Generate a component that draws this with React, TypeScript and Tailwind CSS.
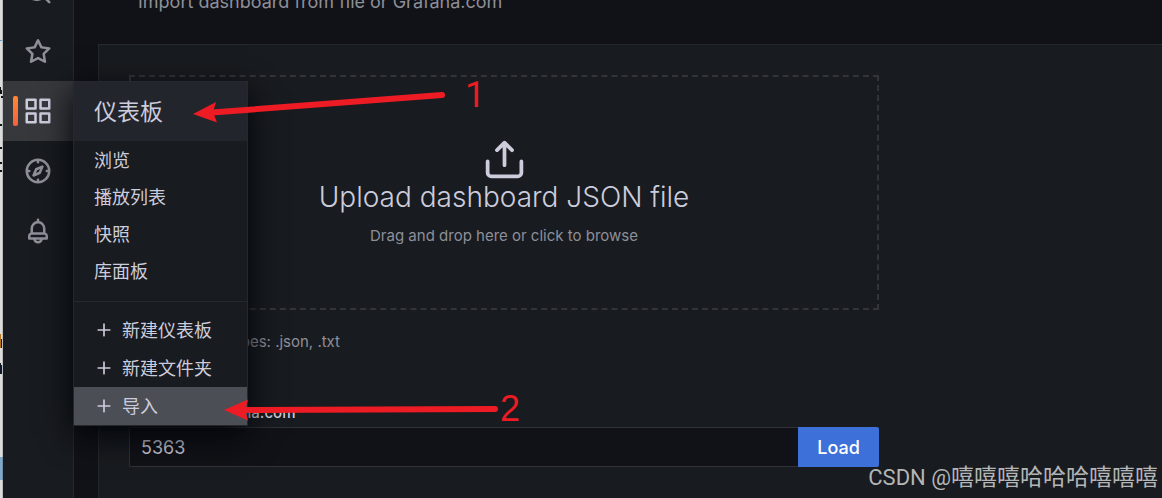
import React from 'react';

const ICONS = {
  search:
    'M21.71,20.29,18,16.61A9,9,0,1,0,16.61,18l3.68,3.68a1,1,0,0,0,1.42,0A1,1,0,0,0,21.71,20.29ZM11,18a7,7,0,1,1,7-7A7,7,0,0,1,11,18Z',
  star: 'M22,9.67A1,1,0,0,0,21.14,9l-5.69-.83L12.9,3a1,1,0,0,0-1.8,0L8.55,8.16,2.86,9a1,1,0,0,0-.81.68,1,1,0,0,0,.25,1l4.13,4-1,5.68A1,1,0,0,0,6.9,21.44L12,18.77l5.1,2.67a.93.93,0,0,0,.46.12,1,1,0,0,0,.59-.19,1,1,0,0,0,.4-1l-1-5.68,4.13-4A1,1,0,0,0,22,9.67Zm-6.15,4a1,1,0,0,0-.29.88l.72,4.2-3.76-2a1.06,1.06,0,0,0-.94,0l-3.76,2,.72-4.2a1,1,0,0,0-.29-.88l-3-3,4.21-.61a1,1,0,0,0,.76-.55L12,5.7l1.88,3.82a1,1,0,0,0,.76.55l4.21.61Z',
  apps: 'M10,13H3a1,1,0,0,0-1,1v7a1,1,0,0,0,1,1h7a1,1,0,0,0,1-1V14A1,1,0,0,0,10,13ZM9,20H4V15H9ZM21,2H14a1,1,0,0,0-1,1v7a1,1,0,0,0,1,1h7a1,1,0,0,0,1-1V3A1,1,0,0,0,21,2ZM20,9H15V4h5Zm1,4H14a1,1,0,0,0-1,1v7a1,1,0,0,0,1,1h7a1,1,0,0,0,1-1V14A1,1,0,0,0,21,13Zm-1,7H15V15h5ZM10,2H3A1,1,0,0,0,2,3v7a1,1,0,0,0,1,1h7a1,1,0,0,0,1-1V3A1,1,0,0,0,10,2ZM9,9H4V4H9Z',
  compass:
    'M12,2A10,10,0,1,0,22,12,10,10,0,0,0,12,2Zm1,17.93V19a1,1,0,0,0-2,0v.93A8,8,0,0,1,4.07,13H5a1,1,0,0,0,0-2H4.07A8,8,0,0,1,11,4.07V5a1,1,0,0,0,2,0V4.07A8,8,0,0,1,19.93,11H19a1,1,0,0,0,0,2h.93A8,8,0,0,1,13,19.93ZM15.14,7.55l-5,2.12a1,1,0,0,0-.52.52l-2.12,5a1,1,0,0,0,.21,1.1,1,1,0,0,0,.7.3.93.93,0,0,0,.4-.09l5-2.12a1,1,0,0,0,.52-.52l2.12-5a1,1,0,0,0-1.31-1.31Zm-2.49,5.1-2.28,1,1-2.28,2.28-1Z',
  bell: 'M18,13.18V10a6,6,0,0,0-5-5.91V3a1,1,0,0,0-2,0V4.09A6,6,0,0,0,6,10v3.18A3,3,0,0,0,4,16v2a1,1,0,0,0,1,1H8.14a4,4,0,0,0,7.72,0H19a1,1,0,0,0,1-1V16A3,3,0,0,0,18,13.18ZM8,10a4,4,0,0,1,8,0v3H8Zm4,10a2,2,0,0,1-1.72-1h3.44A2,2,0,0,1,12,20Zm6-3H6V16a1,1,0,0,1,1-1H17a1,1,0,0,1,1,1Z',
  upload:
    'M8.71,7.71,11,5.41V15a1,1,0,0,0,2,0V5.41l2.29,2.3a1,1,0,0,0,1.42,0,1,1,0,0,0,0-1.42l-4-4a1,1,0,0,0-.33-.21,1,1,0,0,0-.76,0,1,1,0,0,0-.33.21l-4,4A1,1,0,1,0,8.71,7.71ZM21,12a1,1,0,0,0-1,1v6a1,1,0,0,1-1,1H5a1,1,0,0,1-1-1V13a1,1,0,0,0-2,0v6a3,3,0,0,0,3,3H19a3,3,0,0,0,3-3V13A1,1,0,0,0,21,12Z',
  plus: 'M19,11H13V5a1,1,0,0,0-2,0v6H5a1,1,0,0,0,0,2h6v6a1,1,0,0,0,2,0V13h6A1,1,0,0,0,19,11Z',
};

const LINKS = ['浏览', '播放列表', '快照', '库面板'];

const ACTIONS = [
  { label: '新建仪表板', active: false },
  { label: '新建文件夹', active: false },
  { label: '导入', active: true },
];

function Icon({ name, className }: { name: keyof typeof ICONS; className: string }) {
  return (
    <svg viewBox="0 0 24 24" fill="currentColor" className={`shrink-0 ${className}`} aria-hidden="true">
      <path d={ICONS[name]} />
    </svg>
  );
}

function NavLink({ name, label }: { name: keyof typeof ICONS; label: string }) {
  return (
    <a href="#" aria-label={label} className="flex h-[60px] shrink-0 items-center justify-center text-[#8e8f99]">
      <Icon name={name} className="size-[30px]" />
    </a>
  );
}

function DashboardMenu() {
  return (
    <div className="absolute top-0 left-full w-[175px] border border-[#25282d] bg-[#181b1f] text-lg text-[#ccccdc] shadow-[0_10px_30px_#010409]">
      <a href="#" className="flex h-[59px] items-center bg-[#22252b] px-5 pt-0.5 text-[23px]">
        仪表板
      </a>
      <ul className="pt-px">
        {LINKS.map((label) => (
          <li key={label}>
            <a href="#" className="flex h-[37px] items-center px-5">
              {label}
            </a>
          </li>
        ))}
      </ul>
      <ul className="mt-[11px] border-t border-[#25282d] pt-[9px]">
        {ACTIONS.map((action) => (
          <li key={action.label} className={action.active ? 'bg-[#4c4e55]' : ''}>
            <a href="#" className="flex h-[38px] items-center gap-2 px-5">
              <Icon name="plus" className="size-5" />
              <span className="pt-0.5">{action.label}</span>
            </a>
          </li>
        ))}
      </ul>
    </div>
  );
}

function Sidebar() {
  return (
    <nav className="relative z-10 flex w-[71px] shrink-0 flex-col border-r border-[#25282d] bg-[#181b1f]">
      <div className="flex h-[21px] flex-col justify-end overflow-hidden">
        <NavLink name="search" label="Search" />
      </div>
      <NavLink name="star" label="Starred" />
      <div className="relative">
        <a href="#" aria-label="Dashboards" className="flex h-[60px] items-center justify-center bg-[#36383c] text-[#ccccdc]">
          <Icon name="apps" className="size-[30px]" />
        </a>
        <span className="absolute top-[15px] left-[10px] h-[30px] w-[5px] rounded-xs bg-linear-to-b from-[#ff8833] to-[#f55f3e]" />
        <DashboardMenu />
      </div>
      <NavLink name="compass" label="Explore" />
      <NavLink name="bell" label="Alerting" />
    </nav>
  );
}

// Sliver of the window that sits behind the browser
function WindowEdge() {
  return (
    <div className="w-[3px] shrink-0 bg-[#dcdcdc]">
      <svg width="3" height="498" aria-hidden="true">
        <path d="M0 40h2v1H0z" fill="#4aa3e8" />
        <path d="M0 87h1v3h1v4H0zM1 96h2v2H1zM0 124h2v2H0zM0 147h2v2H0zM0 162h2v2H0zM0 170h2v2H0z" fill="#111" />
        <path d="M0 334h1v14H0z" fill="#b8741a" />
        <path d="M1 339h1v9H1zM0 363h1v2h1v9H0z" fill="#0c1a2c" />
        <path d="M0 457h3v23H0z" fill="#7fa8c9" />
        <path d="M2 0h1v498H2z" fill="#000" opacity="0.15" />
      </svg>
    </div>
  );
}

function Annotations() {
  return (
    <svg width="540" height="440" className="pointer-events-none absolute top-0 left-0 z-20" fill="#ed1c24" aria-hidden="true">
      <path d="M212 112.500L442 95" stroke="#ed1c24" strokeWidth="6" strokeLinecap="round" />
      <path d="M193 114L216 102L213 112L217 122.500Z" />
      <path d="M245 410L495 409" stroke="#ed1c24" strokeWidth="6" strokeLinecap="round" />
      <path d="M224 410L248 399.500L245 410L248 420.500Z" />
      <text x="465" y="107" className="font-[Roboto,sans-serif] text-4xl">1</text>
      <text x="500" y="421" className="font-['Liberation_Sans',sans-serif] text-4xl">2</text>
    </svg>
  );
}

export default function App() {
  return (
    <div className="relative flex h-screen overflow-hidden bg-[#111217] font-[Inter,'Noto_Sans_CJK_SC',sans-serif] text-[#ccccdc]">
      <WindowEdge />
      <Sidebar />

      <main className="flex min-w-0 grow flex-col pl-6">
        <header className="flex h-11 shrink-0 flex-col justify-end overflow-hidden pb-[30px] pl-10">
          <p className="shrink-0 text-lg leading-6 text-[#8e8f99]">Import dashboard from file or Grafana.com</p>
        </header>

        <section className="grow border-t border-l border-[#25282d] bg-[#181b1f] p-[30px]">
          <div className="max-w-[750px]">
            <button
              type="button"
              className="flex h-[235px] w-full flex-col items-center justify-center border-2 border-dashed border-[#323439] pb-0.5"
            >
              <Icon name="upload" className="size-[45px]" />
              <span className="text-[28px] leading-[30px] font-light">Upload dashboard JSON file</span>
              <span className="mt-3.5 text-[15px] leading-5 text-[#8e8f99]">Drag and drop here or click to browse</span>
            </button>
            <p className="mt-[22px] text-[15px] leading-5 text-[#8e8f99]">Accepted file types: .json, .txt</p>

            <form className="mt-[51px]" onSubmit={(e) => e.preventDefault()}>
              <label htmlFor="gcom" className="block text-[15px] leading-5 font-medium">
                Import via grafana.com
              </label>
              <div className="mt-1 flex h-10">
                <input
                  id="gcom"
                  type="text"
                  defaultValue="5363"
                  className="min-w-0 grow rounded-l-xs border border-r-0 border-[#2f3136] bg-[#111217] px-[11px] pt-0.5 text-lg outline-none"
                />
                <button type="submit" className="w-[81px] rounded-r-xs bg-[#3d71d9] pt-0.5 text-lg font-medium text-white">
                  Load
                </button>
              </div>
            </form>
          </div>
        </section>
      </main>

      <Annotations />
      <p className="absolute right-1 bottom-1 z-20 font-[Roboto,'Noto_Sans_CJK_SC',sans-serif] text-[23px] leading-8 text-[#b4b5b7]">
        <span className="text-[22px]">CSDN @</span>嘻嘻嘻哈哈哈嘻嘻嘻
      </p>
    </div>
  );
}
